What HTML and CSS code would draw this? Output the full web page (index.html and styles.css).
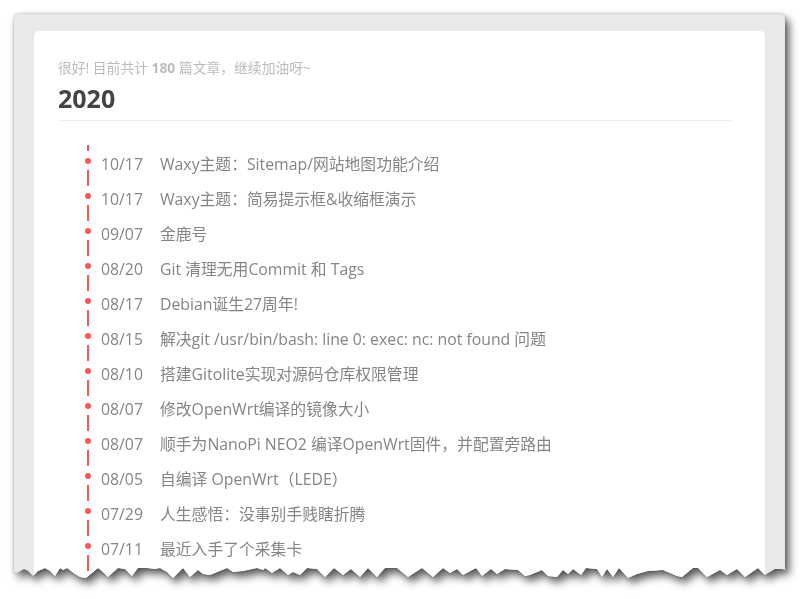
FILE: index.html
```html
<!DOCTYPE html>
<html lang="zh-CN">
<head>
<meta charset="utf-8">
<title>归档</title>
<link rel="stylesheet" href="styles.css">
</head>
<body>
<div class="shadow">
  <div class="tear">
    <main class="frame">
      <section class="card">
        <p class="summary">很好! 目前共计 <b>180</b> 篇文章，继续加油呀~</p>
        <h2 class="year">2020</h2>
        <ul class="timeline">
          <li class="row"><span class="date">10/17</span><a class="title">Waxy主题：Sitemap/网站地图功能介绍</a></li>
          <li class="row"><span class="date">10/17</span><a class="title">Waxy主题：简易提示框&amp;收缩框演示</a></li>
          <li class="row"><span class="date">09/07</span><a class="title">金鹿号</a></li>
          <li class="row"><span class="date">08/20</span><a class="title">Git 清理无用Commit 和 Tags</a></li>
          <li class="row"><span class="date">08/17</span><a class="title">Debian诞生27周年!</a></li>
          <li class="row"><span class="date">08/15</span><a class="title">解决git /usr/bin/bash: line 0: exec: nc: not found 问题</a></li>
          <li class="row"><span class="date">08/10</span><a class="title">搭建Gitolite实现对源码仓库权限管理</a></li>
          <li class="row"><span class="date">08/07</span><a class="title">修改OpenWrt编译的镜像大小</a></li>
          <li class="row"><span class="date">08/07</span><a class="title">顺手为NanoPi NEO2 编译OpenWrt固件，并配置旁路由</a></li>
          <li class="row"><span class="date">08/05</span><a class="title">自编译 OpenWrt（LEDE）</a></li>
          <li class="row"><span class="date">07/29</span><a class="title">人生感悟：没事别手贱瞎折腾</a></li>
          <li class="row"><span class="date">07/11</span><a class="title">最近入手了个采集卡</a></li>
        </ul>
      </section>
    </main>
  </div>
</div>
</body>
</html>
```
FILE: styles.css
```css
* { box-sizing: border-box; }
html, body { margin: 0; height: 599px; overflow: hidden; background: #fff; }
body {
  padding: 14px 15px 0 14px;
  font-family: "Open Sans", "Noto Sans CJK SC", sans-serif;
}
.shadow {
  height: 565px;
  filter: drop-shadow(0 0 1.5px rgba(0,0,0,.25)) drop-shadow(4px 5px 4px rgba(0,0,0,.65));
}
.tear {
  height: 100%;
  clip-path: polygon(0 0, 771px 0, 771px 556px, 768px 555px, 761px 555px, 751px 561px, 744px 554px, 731px 563px, 723px 555px, 713px 561px, 706px 556px, 693px 563px, 684px 554px, 679px 554px, 668px 563px, 663px 562px, 649px 556px, 634px 557px, 623px 560px, 614px 564px, 605px 554px, 599px 563px, 593px 555px, 588px 563px, 583px 555px, 572px 554px, 567px 561px, 559px 555px, 554px 560px, 549px 556px, 543px 563px, 534px 562px, 528px 556px, 516px 561px, 511px 562px, 504px 556px, 491px 555px, 483px 560px, 477px 555px, 468px 562px, 462px 554px, 449px 561px, 443px 555px, 436px 559px, 429px 554px, 419px 563px, 408px 554px, 394px 563px, 383px 554px, 371px 554px, 363px 563px, 354px 554px, 346px 563px, 337px 555px, 329px 561px, 320px 554px, 311px 563px, 303px 555px, 293px 554px, 286px 561px, 279px 558px, 274px 561px, 266px 554px, 258px 559px, 251px 554px, 249px 556px, 243px 554px, 229px 557px, 219px 558px, 213px 554px, 196px 561px, 189px 560px, 184px 556px, 176px 563px, 169px 554px, 159px 564px, 153px 558px, 146px 554px, 141px 555px, 133px 554px, 124px 554px, 118px 562px, 111px 555px, 104px 554px, 94px 563px, 89px 558px, 84px 554px, 78px 559px, 72px 564px, 66px 563px, 61px 560px, 53px 554px, 49px 556px, 46px 554px, 41px 562px, 36px 557px, 31px 554px, 24px 557px, 19px 562px, 14px 557px, 10px 555px, 3px 559px, 0 558px);
}
.frame {
  display: flex;
  flex-direction: column;
  height: 100%;
  padding: 17px 20px 0;
  background: #e9e9e9;
  border-radius: 5px 5px 0 0;
}
.card {
  flex: 1;
  display: flex;
  flex-direction: column;
  min-height: 0;
  padding: 29px 34px 0 24px;
  background: #fff;
  border-radius: 5px 5px 0 0;
}
.summary {
  margin: 0;
  font-size: 13.8px;
  line-height: 16px;
  color: #bbb;
}
.summary b { font-weight: 700; }
.year {
  margin: 5px 0 0;
  padding-bottom: 5px;
  font-size: 25px;
  line-height: 34px;
  font-weight: 700;
  color: #444;
  border-bottom: 1px solid #eee;
}
.timeline {
  flex: 1;
  min-height: 0;
  margin: 24px 0 0;
  padding: 2px 0 0 27px;
  list-style: none;
  overflow: hidden;
  background-image: repeating-linear-gradient(#f55 0 6px, transparent 6px 25px, #f55 25px 35px);
  background-size: 2px 100%;
  background-position: 29px 0;
  background-repeat: no-repeat;
}
.row {
  display: flex;
  height: 35px;
  align-items: center;
  font-size: 15.8px;
  color: #858585;
}
.row::before {
  content: "";
  width: 6px;
  height: 6px;
  margin: -8px 10px 0 0;
  border-radius: 50%;
  background: #f55;
}
.date { width: 59px; margin-top: -2px; }
.title { margin-top: -3px; color: #858585; }
```
